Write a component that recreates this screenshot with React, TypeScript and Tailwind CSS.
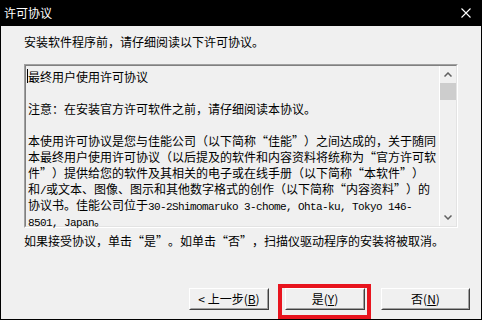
import React from "react";

const L = () => <span className="inline-block w-[12px] text-right">“</span>;
const R = () => <span className="inline-block w-[12px] text-left">”</span>;
const M = ({ children }: { children: React.ReactNode }) => (
  <span className="font-['Liberation_Mono',monospace] text-[11px] tracking-[-0.6px]">{children}</span>
);

const lines: React.ReactNode[] = [
  "最终用户使用许可协议",
  "",
  "注意：在安装官方许可软件之前，请仔细阅读本协议。",
  "",
  <>本使用许可协议是您与佳能公司（以下简称<L />佳能<R />）之间达成的，关于随同</>,
  <>本最终用户使用许可协议（以后提及的软件和内容资料将统称为<L />官方许可软</>,
  <>件<R />）提供给您的软件及其相关的电子或在线手册（以下简称<L />本软件<R />）</>,
  <>和<M>/</M>或文本、图像、图示和其他数字格式的创作（以下简称<L />内容资料<R />）的</>,
  <>
    协议书。佳能公司位于<M>30-2Shimomaruko 3-chome, Ohta-ku, Tokyo 146-</M>
  </>,
  <>
    <M>8501, Japan</M>。
  </>,
];

function Btn({ children, className = "" }: { children: React.ReactNode; className?: string }) {
  return (
    <div className={"h-[22px] border border-t-white border-l-white border-b-[#404040] border-r-[#404040] " + className}>
      <div className="h-full flex items-center justify-center border border-t-[#f0f0f0] border-l-[#f0f0f0] border-b-[#a0a0a0] border-r-[#a0a0a0] bg-[#f0f0f0] text-[12px] leading-[16px] text-black">
        {children}
      </div>
    </div>
  );
}

export default function App() {
  return (
    <div className="w-[482px] h-[320px] bg-black flex flex-col font-['Noto_Sans_CJK_SC',sans-serif] overflow-hidden">
      <div className="h-[26px] flex items-center justify-between pl-[4px] pr-[11px] shrink-0">
        <span className="text-white text-[12px] leading-[16px]">许可协议</span>
        <svg width="10" height="10" viewBox="0 0 10 10">
          <path d="M0.5 0.5 L9.5 9.5 M9.5 0.5 L0.5 9.5" stroke="white" strokeWidth="1.1" />
        </svg>
      </div>
      <div className="flex-1 mx-[1px] mb-[1px] bg-[#f0f0f0] flex flex-col relative">
        <div className="pl-[23px] pt-[8px] text-[12px] leading-[16px] text-black whitespace-nowrap">
          安装软件程序前，请仔细阅读以下许可协议。
        </div>
        <div className="ml-[23px] mt-[14px] w-[434px] h-[164px] border border-t-[#a0a0a0] border-l-[#a0a0a0] border-b-white border-r-white">
          <div className="h-full flex border border-t-[#808080] border-l-[#808080] border-b-[#e3e3e3] border-r-[#e3e3e3] bg-[#f0f0f0]">
            <div className="flex-1 pl-[2px] pt-[3px] text-[12px] leading-[16px] text-black relative">
              <div className="absolute left-[1px] top-[3px] w-[1px] h-[14px] bg-black" />
              {lines.map((l, i) => (
                <div key={i} className="h-[16px] whitespace-nowrap">{l}</div>
              ))}
            </div>
            <div className="w-[17px] flex flex-col border-l border-l-white">
              <div className="h-[17px] flex items-center justify-center">
                <svg width="8" height="5" viewBox="0 0 8 5">
                  <path d="M0.5 4.5 L4 1 L7.5 4.5" stroke="#606060" strokeWidth="1.5" fill="none" />
                </svg>
              </div>
              <div className="h-[17px] bg-[#cdcdcd]" />
              <div className="flex-1" />
              <div className="h-[17px] flex items-center justify-center">
                <svg width="8" height="5" viewBox="0 0 8 5">
                  <path d="M0.5 0.5 L4 4 L7.5 0.5" stroke="#606060" strokeWidth="1.5" fill="none" />
                </svg>
              </div>
            </div>
          </div>
        </div>
        <div className="pl-[23px] mt-[5px] text-[12px] leading-[16px] text-black whitespace-nowrap">
          如果接受协议，单击<L />是<R />。如单击<L />否<R />，扫描仪驱动程序的安装将被取消。
        </div>
        <div className="mt-auto mb-[9px] flex justify-end pr-[11px] gap-[16px]">
          <Btn className="w-[80px]">&lt; 上一步(<span className="underline">B</span>)</Btn>
          <Btn className="w-[80px]">是(<span className="underline">Y</span>)</Btn>
          <Btn className="w-[89px]">否(<span className="underline">N</span>)</Btn>
        </div>
        <div className="absolute left-[277px] top-[258px] w-[93px] h-[35px] border-[4px] border-[#e8141e]" />
      </div>
    </div>
  );
}
